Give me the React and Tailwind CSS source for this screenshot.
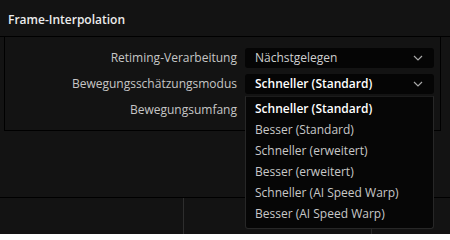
import { useState } from "react";

const rows = [
  { label: "Retiming-Verarbeitung", value: "Nächstgelegen" },
  { label: "Bewegungsschätzungsmodus", value: "Schneller (Standard)", active: true },
  { label: "Bewegungsumfang", value: "" },
];

const options = [
  "Schneller (Standard)",
  "Besser (Standard)",
  "Schneller (erweitert)",
  "Besser (erweitert)",
  "Schneller (AI Speed Warp)",
  "Besser (AI Speed Warp)",
];

function Chevron() {
  return (
    <svg width="10" height="6" viewBox="0 0 10 6" className="shrink-0">
      <polyline points="1,1 5,5 9,1" fill="none" stroke="#a8a8a8" strokeWidth="1.2" />
    </svg>
  );
}

export default function App() {
  const [selected] = useState(0);

  return (
    <div className="relative w-[450px] h-[234px] overflow-hidden bg-[#131313] font-['Open_Sans',sans-serif] text-[12px] leading-none">
      <div className="h-[36px] pl-2 pt-[14px] font-semibold text-[#ececec]">Frame-Interpolation</div>

      <div className="border-t border-black">
        <div className="ml-1 w-[437px] border-x border-b border-black pt-[11px] pb-[10px] flex flex-col gap-[6px]">
          {rows.map((r) => (
            <div key={r.label} className="flex items-center h-[20px]">
              <div className="w-[232px] text-right text-[#c6c6c6]">{r.label}</div>
              <div className="ml-[8px] w-[189px] h-[20px] rounded-[3px] bg-[#050505] flex items-center justify-between pl-[10px] pr-[11px]">
                <span className={r.active ? "font-semibold text-white" : "text-[#cfcfcf]"}>{r.value}</span>
                <Chevron />
              </div>
            </div>
          ))}
        </div>
      </div>

      {/* bottom panes */}
      <div className="mt-[66px] border-t border-black flex h-[40px]">
        <div className="w-[184px] border-r border-[#2e2e2e]" />
        <div className="w-[188px] border-r border-[#2a2a2a]" />
        <div className="flex-1" />
      </div>

      {/* open dropdown */}
      <div className="absolute left-[245px] top-[96px] w-[189px] h-[133px] bg-[#060606] border border-[#272727] border-t-[#1c1c1c] rounded-b-[3px] pt-[1px]">
        {options.map((o, i) => (
          <div
            key={o}
            className={`h-[21px] flex items-center pl-[9px] ${
              i === selected ? "font-semibold text-white" : "text-[#c8c8c8]"
            }`}
          >
            {o}
          </div>
        ))}
      </div>
    </div>
  );
}
